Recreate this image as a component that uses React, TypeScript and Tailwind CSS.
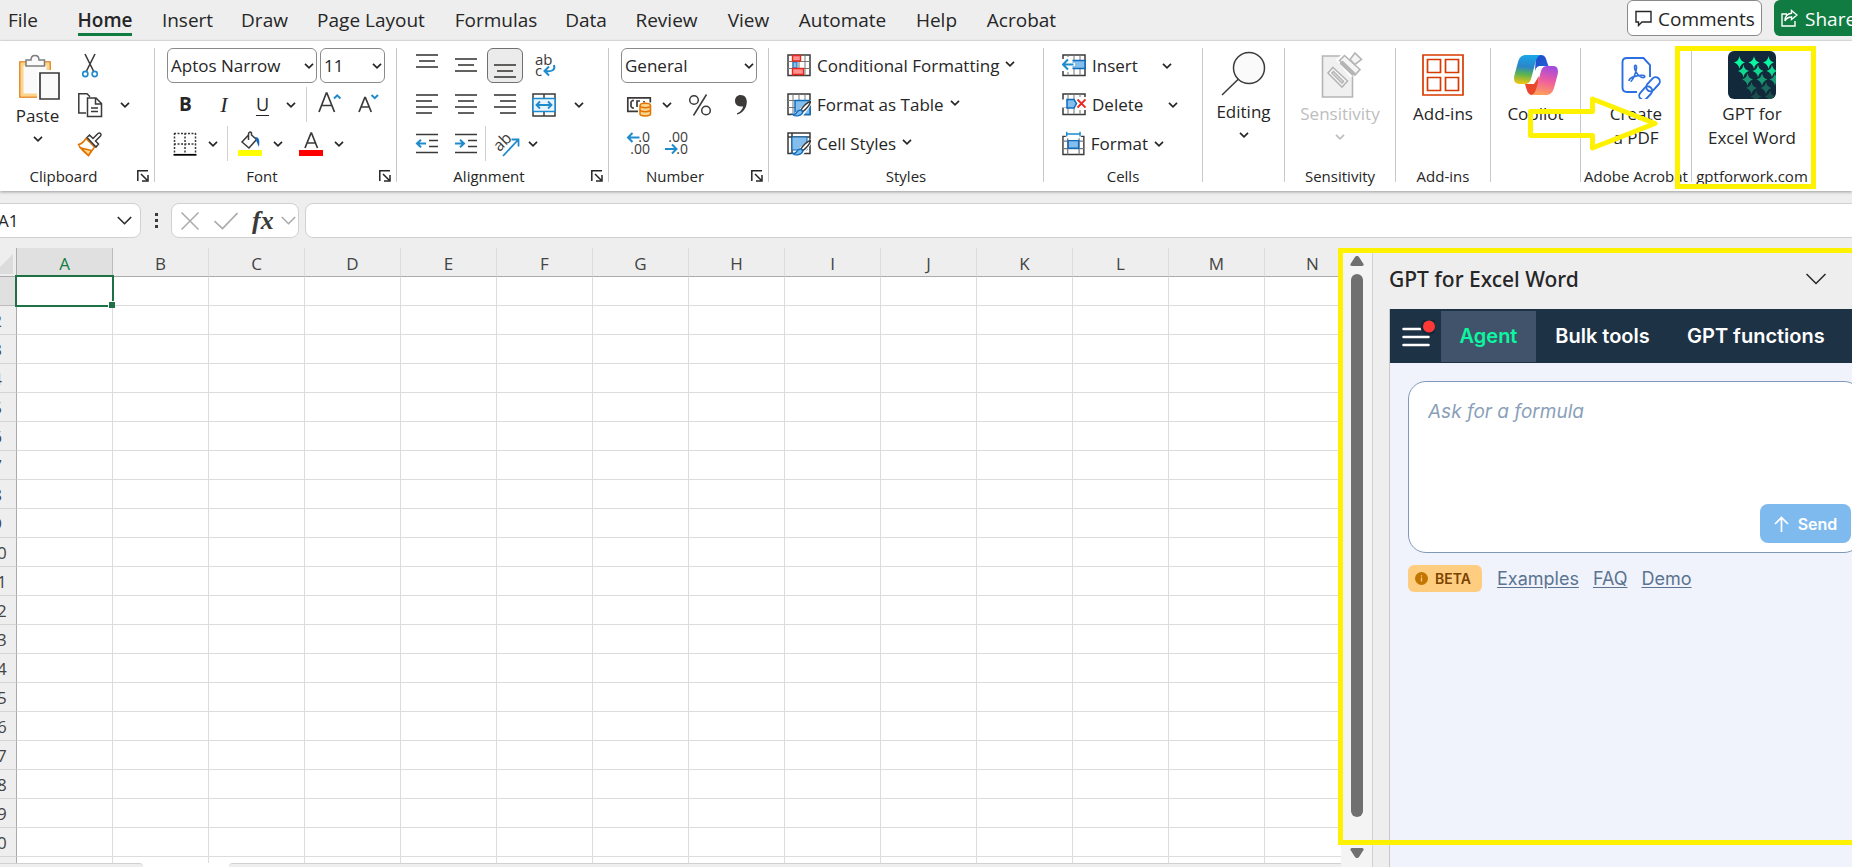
import type { ReactNode } from "react";
import clsx from "clsx";

const TABS = [
  { name: "File", width: "w-[46px] mr-[15px]" },
  { name: "Home", width: "w-[88px]" },
  { name: "Insert", width: "w-[77px]" },
  { name: "Draw", width: "w-[77px]" },
  { name: "Page Layout", width: "w-[136px]" },
  { name: "Formulas", width: "w-[114px]" },
  { name: "Data", width: "w-[66px]" },
  { name: "Review", width: "w-[95px]" },
  { name: "View", width: "w-[69px]" },
  { name: "Automate", width: "w-[119px]" },
  { name: "Help", width: "w-[69px]" },
  { name: "Acrobat", width: "w-[101px]" },
];

const COLUMNS = "ABCDEFGHIJKLMN".split("");
const ROWS = Array.from({ length: 21 }, (_, i) => i + 1);

const INK = "#3b3a39";
const BLUE = "#1e8bcd";

function Chevron({ className = "w-[10px]" }: { className?: string }) {
  return (
    <svg viewBox="0 0 10 6" className={clsx("shrink-0", className)} fill="none" stroke="currentColor" strokeWidth="1.7">
      <path d="M1 .8 5 4.8 9 .8" />
    </svg>
  );
}

function WideChevron({ className }: { className?: string }) {
  return (
    <svg width="15" height="9" viewBox="0 0 15 9" className={clsx("shrink-0", className)} fill="none" stroke="currentColor" strokeWidth="1.6">
      <path d="m.8 1 6.700 6.700L14.200 1" />
    </svg>
  );
}

function ToolButton({ label, className = "w-[39px]", children }: { label: string; className?: string; children: ReactNode }) {
  return (
    <button aria-label={label} className={clsx("flex h-[35px] shrink-0 items-center justify-center", className)}>
      {children}
    </button>
  );
}

function Separator() {
  return <span className="mx-[6px] h-[35px] w-px shrink-0 bg-[#d1d1d1]" />;
}

function Group({
  label,
  launcher,
  className,
  children,
}: {
  label?: string;
  launcher?: boolean;
  className: string;
  children: ReactNode;
}) {
  return (
    <section className={clsx("flex h-[134px] shrink-0 flex-col border-r border-[#c8c8c8]", className)}>
      <div className="h-[113px] shrink-0">{children}</div>
      <div className="mt-[5px] flex h-5 shrink-0 items-center">
        <span className={clsx("flex-1 text-center text-[15px] leading-5 whitespace-nowrap", launcher && "pr-[10px]")}>{label}</span>
        {launcher && (
          <button aria-label={`${label} settings`} className="mr-[5px]">
            <svg width="12" height="12" viewBox="0 0 12 12" fill="none" stroke="#262626" strokeWidth="1.5">
              <path d="M.8 11V.8H11M4 4l6 6M11 5v6H5" />
            </svg>
          </button>
        )}
      </div>
    </section>
  );
}

function LargeButton({
  icon,
  lines,
  chevron,
  disabled,
  iconHeight = "h-[54px]",
}: {
  icon: ReactNode;
  lines: string[];
  chevron?: boolean;
  disabled?: boolean;
  iconHeight?: string;
}) {
  return (
    <button disabled={disabled} className={clsx("flex w-full flex-col items-center text-[17px] leading-6", disabled && "text-[#bdbdbd]")}>
      <span className={clsx("flex items-center justify-center", iconHeight)}>{icon}</span>
      {lines.map((line) => (
        <span key={line} className="whitespace-nowrap">{line}</span>
      ))}
      {chevron && <Chevron className="mt-2 w-[10px]" />}
    </button>
  );
}

function Lines({ rows, y = 0 }: { rows: [number, number][]; y?: number }) {
  return (
    <svg width="24" height="24" viewBox="0 0 24 24" stroke={INK} strokeWidth="1.6">
      {rows.map(([x1, x2], i) => (
        <path key={i} d={`M${x1} ${y + i * 6}H${x2}`} />
      ))}
    </svg>
  );
}

function PasteIcon() {
  return (
    <svg width="44" height="48" viewBox="0 0 44 48" fill="none">
      <path d="M4 9h30v35H4z" fill="#fafafa" stroke="#e27400" strokeWidth="1.6" />
      <path d="M6 11h26v31H6z" stroke="#fbd58c" strokeWidth="3" />
      <path d="M10 13V7h5c0-3 1-4.500 4-4.500S23 4 23 7h5.500v6z" fill="#fafafa" stroke="#7d7d7d" strokeWidth="1.5" />
      <path d="M21 17h25v31H21z" fill="#fff" />
      <path d="M24 20h19v26H24z" fill="#fafafa" stroke={INK} strokeWidth="1.700" />
    </svg>
  );
}

function CutIcon() {
  return (
    <svg width="18" height="26" viewBox="0 0 18 26" fill="none" strokeWidth="1.6">
      <path d="M4 1 12.500 18M14 1 5.500 18" stroke={INK} />
      <circle cx="4.300" cy="21" r="2.600" stroke={BLUE} />
      <circle cx="13.700" cy="21" r="2.600" stroke={BLUE} />
    </svg>
  );
}

function CopyIcon() {
  return (
    <svg width="26" height="26" viewBox="0 0 26 26" fill="none" stroke={INK} strokeWidth="1.500">
      <path d="M9 21H1.800V1.800H10l3 3" />
      <path d="M10.500 6H19l5.500 5.500V24.500h-14zM18.500 6v6h6M14 16h7M14 19.500h7" />
    </svg>
  );
}

function PainterIcon() {
  return (
    <svg width="26" height="26" viewBox="0 0 26 26" fill="none" strokeWidth="1.500">
      <path d="m9 7.500 8.500 8.500-6 8.500C8 22 4 18.500 1.500 13.500 4.500 13 7 10.500 9 7.500z" fill="#fff" stroke="#e27400" />
      <path d="m4 17 10.500 2.500-3 5z" fill="#fbd58c" stroke="#e27400" />
      <path d="m10 6.500 2.500-2.500L16 7.500l5-5c2-1.500 4 .5 2.500 2.500l-5 5 3 3-2.500 3z" fill="#fff" stroke={INK} />
    </svg>
  );
}

function BordersIcon() {
  return (
    <svg width="24" height="24" viewBox="0 0 24 24" fill="none" stroke={INK} strokeWidth="1.500">
      <path d="M1 1.500h22M1.500 1v20M22.500 1v20M12 1v20M1 12h22" strokeDasharray="2 1.500" />
      <path d="M.5 22.800h23" stroke="#000" strokeWidth="1.800" />
    </svg>
  );
}

function FillIcon() {
  return (
    <svg width="24" height="26" viewBox="0 0 24 26" fill="none" strokeWidth="1.500">
      <path d="M10.500 4 4 11l7 6 7.500-8.500L13.500 4V2c-1-1.500-3-1-3 1v6" stroke={INK} />
      <path d="M17 6c4 0 5 3 4 10-1.500-3-2-5-3-6.500z" fill="#1668b5" />
      <path d="M0 19h24v6H0z" fill="#ff0" />
    </svg>
  );
}

function FontColorIcon() {
  return (
    <svg width="24" height="26" viewBox="0 0 24 26" fill="none" strokeWidth="1.700">
      <path d="M6 17 12 2h.5l6 15M8 12h9" stroke={INK} />
      <path d="M0 19h24v6H0z" fill="red" />
    </svg>
  );
}

function FontSizeIcon({ up }: { up?: boolean }) {
  return (
    <svg width="24" height="28" viewBox="0 0 24 28" fill="none" strokeWidth="1.700">
      <path d={up ? "M1 21 8.300 2h.6L16.500 21M3.500 14.500h10.500" : "M1 21 6.800 6.500h.6L13.300 21M3 16h8.500"} stroke={INK} />
      <path d={up ? "M16 7.500 19.200 4.300 22.400 7.500" : "M13.500 4 16.800 7.200 20 4"} stroke={BLUE} strokeWidth="2" />
    </svg>
  );
}

function WrapIcon() {
  return (
    <svg width="24" height="28" viewBox="0 0 24 28" fill="none" className="overflow-visible">
      <text x="2" y="13" fontSize="15" fill={INK} fontFamily="Open Sans">ab</text>
      <text x="2" y="24" fontSize="15" fill={INK} fontFamily="Open Sans">c</text>
      <path d="M21 13c1.500 5-2 7-9 6M16 14.500 11.500 19l4.500 4.500" stroke={BLUE} strokeWidth="2" />
    </svg>
  );
}

function MergeIcon() {
  return (
    <svg width="24" height="24" viewBox="0 0 24 24" fill="none" strokeWidth="1.500">
      <path d="M1 1h22v22H1zM12 1v5M12 18v5" stroke={INK} />
      <path d="M1 5.500h22v13H1z" fill="#eaf4fc" stroke={BLUE} />
      <path d="M4.500 12h15M8 8.500 4.500 12 8 15.500M16 8.500 19.500 12 16 15.500" stroke={BLUE} strokeWidth="1.800" />
    </svg>
  );
}

function IndentIcon({ right }: { right?: boolean }) {
  return (
    <svg width="24" height="24" viewBox="0 0 24 24" fill="none">
      <path d="M1 2.500h22M14 8.500h9M14 14.500h9M1 20.500h22" stroke={INK} strokeWidth="1.600" />
      <path d={right ? "M1 11.500h9M6 7.800l4 3.700-4 3.700" : "M2 11.500h9M6 7.800 2 11.500l4 3.700"} stroke={BLUE} strokeWidth="2" />
    </svg>
  );
}

function OrientationIcon() {
  return (
    <svg width="26" height="26" viewBox="0 0 26 26" fill="none" className="overflow-visible">
      <text x="3" y="19" fontSize="16" fill={INK} fontFamily="Open Sans" transform="rotate(-45 7 17)">ab</text>
      <path d="M9 25 24 9M17.500 8.500H24.500V15.500" stroke={BLUE} strokeWidth="1.800" />
    </svg>
  );
}

function CurrencyIcon() {
  return (
    <svg width="26" height="24" viewBox="0 0 26 24" fill="none">
      <path d="M1.800 4.800h22.500v13.500H1.800z" stroke={INK} strokeWidth="1.700" />
      <path d="M8 7.500H6.500L5 9v4.500L6.500 15H8M14 8h-3v6M18 8v3" stroke={INK} strokeWidth="1.700" />
      <path d="M12 9.500h14V24H12z" fill="#fff" />
      <path d="M14 12.500v8.500c0 2.500 10.500 2.500 10.500 0v-8.500" fill="#fbd58c" stroke="#e27400" strokeWidth="1.500" />
      <ellipse cx="19.300" cy="12.500" rx="5.200" ry="2.200" fill="#fbd58c" stroke="#e27400" strokeWidth="1.500" />
      <path d="M14 16.800c0 2.500 10.500 2.500 10.500 0" stroke="#e27400" strokeWidth="1.500" />
    </svg>
  );
}

function PercentIcon() {
  return (
    <svg width="24" height="24" viewBox="0 0 24 24" fill="none" stroke={INK} strokeWidth="1.500">
      <circle cx="6" cy="7" r="4.300" />
      <circle cx="18" cy="17.500" r="4.300" />
      <path d="M18.500 1.500 5.500 22.500" />
    </svg>
  );
}

function CommaIcon() {
  return (
    <svg width="14" height="22" viewBox="0 0 14 22">
      <path d="M6.500 1c4 0 6.500 2.800 6.300 7.300C12.500 14.500 8.500 19.500 3 20.500v-1.300c3-1 5.700-3.800 6-7C4 13.500 1 10.500 1 6.800 1 3.300 3.500 1 6.500 1z" fill={INK} />
    </svg>
  );
}

function DecimalIcon({ decrease }: { decrease?: boolean }) {
  return (
    <svg width="26" height="28" viewBox="0 0 26 28" fill="none" className="overflow-visible">
      <text x="24" y="12" textAnchor="end" fontSize="14" fill={INK} fontFamily="Open Sans">{decrease ? ".00" : ".0"}</text>
      <text x="24" y="24" textAnchor="end" fontSize="14" fill={INK} fontFamily="Open Sans">{decrease ? ".0" : ".00"}</text>
      <path d={decrease ? "M1 19h11.500M8 14.500l4.500 4.500L8 23.500" : "M13.500 7.500H2M6.500 3 2 7.500 6.500 12"} stroke={BLUE} strokeWidth="2" />
    </svg>
  );
}

function SheetGrid() {
  return (
    <>
      <path d="M1 1h22v20.500H1z" fill="#fff" stroke={INK} strokeWidth="1.500" />
      <path d="M1 7.500h22M1 14.500h22M6 1v20.500M12 1v20.500M18 1v20.500" stroke="#777" />
    </>
  );
}

function Brush() {
  return (
    <>
      <path d="M24 7 10 18l-6 5h12l8-11z" fill="#fff" />
      <path d="M23.500 8.500c-3 .5-8 5.500-9.500 8.500l2 1.500c3-2.500 7-7 7.500-10z" fill="#fff" stroke={INK} strokeWidth="1.500" />
      <path d="M14 17c-3-.5-4 1.500-5 3.500-1 1.200-2 1.200-3.500 1 3 2.500 9.500 1.500 10.300-2.700z" fill="#83beec" stroke="#0f6cbd" strokeWidth="1.400" />
    </>
  );
}

function ConditionalIcon() {
  return (
    <svg width="24" height="23" viewBox="0 0 24 23" fill="none">
      <SheetGrid />
      <path d="M6 8h4v6H6z" fill="#83beec" stroke="#0f6cbd" />
      <path d="M5.500 1.500h8V7h-8zM5.500 14.500h11v6h-11z" fill="#ff9191" stroke="#e8281e" strokeWidth="1.400" />
    </svg>
  );
}

function FormatTableIcon() {
  return (
    <svg width="24" height="24" viewBox="0 0 24 24" fill="none">
      <SheetGrid />
      <path d="M8 7.500h15v14H8z" fill="#83beec" stroke="#0f6cbd" strokeWidth="1.500" />
      <Brush />
    </svg>
  );
}

function CellStylesIcon() {
  return (
    <svg width="24" height="24" viewBox="0 0 24 24" fill="none">
      <path d="M1 1h22v20.500H1zM1 5h22M5 1v20" fill="#fff" stroke={INK} strokeWidth="1.500" />
      <path d="M5 5h15v13H5z" fill="#83beec" stroke="#0f6cbd" />
      <Brush />
    </svg>
  );
}

function InsertCellsIcon() {
  return (
    <svg width="24" height="23" viewBox="0 0 24 23" fill="none">
      <SheetGrid />
      <path d="M0 5h10v12H0z" fill="#fff" />
      <path d="M8 6.500h15v8H8z" fill="#83beec" stroke="#0f6cbd" strokeWidth="1.500" />
      <path d="M10.500 3v6H13v3h-2.500v6H5V3z" fill="#fff" />
      <path d="M1.500 10.500h10M6 5.500l-5 5 5 5" stroke={BLUE} strokeWidth="2" />
    </svg>
  );
}

function DeleteCellsIcon() {
  return (
    <svg width="24" height="23" viewBox="0 0 24 23" fill="none">
      <SheetGrid />
      <path d="M0 6.500h4.500v8H0zM13 4h11v13H13z" fill="#fff" />
      <path d="M5 6.500h7l2.500 4-2.500 4.500H5z" fill="#83beec" stroke="#0f6cbd" strokeWidth="1.500" />
      <path d="m15.500 6.500 8 8M23.500 6.500l-8 8" stroke="#e8281e" strokeWidth="1.800" />
    </svg>
  );
}

function FormatCellsIcon() {
  return (
    <svg width="24" height="25" viewBox="0 0 24 25" fill="none">
      <path d="M1 5h22v19H1z" fill="#fff" stroke={INK} strokeWidth="1.500" />
      <path d="M1 10h22M1 18h22M6 5v19M18 5v19" stroke="#777" strokeWidth="1.300" />
      <path d="M4 0h16v7H4z" fill="#fff" />
      <path d="M6.500 9.500h11v8h-11z" fill="#83beec" stroke="#0f6cbd" strokeWidth="1.500" />
      <path d="M5 2.500h14M5 0v5M19 0v5" stroke={BLUE} strokeWidth="1.500" />
    </svg>
  );
}

function SearchIcon() {
  return (
    <svg width="46" height="48" viewBox="0 0 46 48" fill="none" stroke={INK} strokeWidth="1.500">
      <circle cx="28" cy="18" r="15.500" fill="#fafafa" />
      <path d="M17.500 29 1 45" />
    </svg>
  );
}

function SensitivityIcon() {
  return (
    <svg width="42" height="48" viewBox="0 0 42 48" fill="none" stroke="#b5b5b5" strokeWidth="1.600" className="ml-1">
      <path d="M1.500 5h30v41h-30z" fill="#f0f0f0" />
      <path d="m24 0-9 9 14 17 13-4V0z" fill="#fff" stroke="none" />
      <path d="m12 16.500 14.500 13.500-5.500 6L7 22z" fill="#fafafa" />
      <path d="m12.500 20.500 10 10-1.500 1.500-10-10z" />
      <path d="M23.500 4.500 39 18.500l-5 5.500L18.500 9.500z" fill="#f5f5f5" />
      <path d="m20 11 13 12.500" strokeWidth="4.500" />
      <path d="m29 8.500 5-6.500 6.500 6.500-6.500 5z" fill="#f5f5f5" />
    </svg>
  );
}

function AddinsIcon() {
  return (
    <svg width="42" height="42" viewBox="0 0 42 42" fill="none" stroke="#d83b01" strokeWidth="1.700">
      <path d="M1 1h40v40H1z" />
      <path d="M5.500 5.500h13v13h-13zM23.500 5.500h13v13h-13zM5.500 23.500h13v13h-13zM23.500 23.500h13v13h-13z" />
    </svg>
  );
}

function CopilotIcon() {
  return (
    <svg width="44" height="40" viewBox="0 0 44 40">
      <defs>
        <linearGradient id="cpLeft" x1=".4" y1="0" x2=".3" y2="1">
          <stop offset="0" stopColor="#18a5e8" />
          <stop offset=".4" stopColor="#2b86c9" />
          <stop offset=".65" stopColor="#58b255" />
          <stop offset="1" stopColor="#f3c60e" />
        </linearGradient>
        <linearGradient id="cpRight" x1=".6" y1="0" x2=".4" y2="1">
          <stop offset="0" stopColor="#a24be0" />
          <stop offset=".5" stopColor="#ee5e9e" />
          <stop offset="1" stopColor="#ffa05a" />
        </linearGradient>
        <linearGradient id="cpTop" x1="0" y1="0" x2="1" y2="1">
          <stop offset="0" stopColor="#1b49c4" />
          <stop offset="1" stopColor="#2666dd" />
        </linearGradient>
      </defs>
      <path d="M22 0h5c4 0 5 3 6 7l1.500 4H27c-4 0-5 2-6 5z" fill="url(#cpTop)" />
      <path d="M11 29h9l5-8-2 19h-5c-4 0-5-4-7-11z" fill="#e9482c" />
      <path d="M12 0h15c-4 1-5 5-6.500 11L17 24c-1 3.500-3 5-6 5H5c-4 0-6-3-4.500-9L4 7c1.200-4.500 4-7 8-7z" fill="url(#cpLeft)" />
      <path d="M32 40H17c4-1 5-5 6.500-11L27 16c1-3.500 3-5 6-5h6c4 0 6 3 4.500 9L40 33c-1.200 4.500-4 7-8 7z" fill="url(#cpRight)" />
    </svg>
  );
}

function PdfIcon() {
  return (
    <svg width="40" height="42" viewBox="0 0 40 42" fill="none" stroke="#2b6fe0" strokeWidth="1.900" className="mt-[5px] ml-[10px]">
      <path d="M16 35H6c-3 0-4.500-1.500-4.500-4.500V5C1.500 2 3 1 6 1h16.500l6.500 7v12" />
      <path d="M8 24c0-4 11-6.500 15-5.500 2 1 0 3-3 1.500-4-2-6.500-7-6.500-10s2.500-2 2 1.500C15 16 11.500 24 9.500 24.500" strokeWidth="1.600" />
      <rect x="24" y="23" width="16" height="8.500" rx="4.200" transform="rotate(-48 32 27.200)" />
      <rect x="17" y="32" width="15" height="8.500" rx="4.200" transform="rotate(-48 24.500 36)" />
    </svg>
  );
}

const SPARKS = [
  [11.5, 11.5, "#0bf7a0"], [26, 11.5, "#0bf7a0"], [40.500, 11.500, "#0bf7a0"],
  [15.5, 20, "#10d890"], [30, 20, "#10d890"], [44, 20, "#10d890"],
  [19.5, 28.5, "#189a72"], [34, 28.500, "#189a72"], [47, 28.500, "#189a72"],
  [23.5, 37, "#1b6b5c"], [38, 37, "#1b6b5c"],
  [28, 45.500, "#1a4f4c"], [42, 45.500, "#1a4f4c"],
] as const;

function GptIcon() {
  return (
    <svg width="48" height="48" viewBox="0 0 48 48" className="rounded-md">
      <path d="M0 0h48v48H0z" fill="#12283b" />
      {SPARKS.map(([x, y, fill]) => (
        <path key={`${x}-${y}`} d={`M${x} ${y - 6.5}q.6 5 5.500 6.500-4.900 1.500-5.500 6.500-.6-5-5.500-6.500 4.900-1.500 5.500-6.500z`} fill={fill} />
      ))}
    </svg>
  );
}

const STYLE_COMMANDS = [
  { name: "Conditional Formatting", icon: <ConditionalIcon /> },
  { name: "Format as Table", icon: <FormatTableIcon /> },
  { name: "Cell Styles", icon: <CellStylesIcon /> },
];

const CELL_COMMANDS = [
  { name: "Insert", icon: <InsertCellsIcon />, width: "w-[110px]" },
  { name: "Delete", icon: <DeleteCellsIcon />, width: "w-[116px]" },
  { name: "Format", icon: <FormatCellsIcon />, width: "w-[102px]" },
];

function RibbonSelect({ label, value, className }: { label: string; value: string; className: string }) {
  return (
    <span className={clsx("relative block h-[35px]", className)}>
      <select aria-label={label} className="h-full w-full appearance-none rounded-md border border-[#8a8a8a] bg-white pl-[3px] text-[17px]">
        <option>{value}</option>
      </select>
      <Chevron className="pointer-events-none absolute top-[15px] right-[3px] w-[10px]" />
    </span>
  );
}

function TabBar() {
  return (
    <header className="flex h-[41px] shrink-0 border-b border-[#e3e3e3]">
      <nav className="flex">
        {TABS.map((tab) => (
          <button key={tab.name} className={clsx("flex h-10 flex-col items-center pt-[6px] text-[19px] leading-7 whitespace-nowrap", tab.width)}>
            {tab.name === "Home" ? (
              <span className="h-[30px] border-b-3 border-[#107c41] font-semibold">{tab.name}</span>
            ) : (
              tab.name
            )}
          </button>
        ))}
      </nav>
      <div className="-mr-2 ml-auto flex h-9 gap-3">
        <button className="flex w-[135px] items-center gap-[6px] rounded-md border border-[#8a8a8a] bg-white pt-[2px] pl-[7px] text-[19px]">
          <svg width="17" height="17" viewBox="0 0 17 17" fill="none" stroke="#262626" strokeWidth="1.400" className="-mt-[2px]">
            <path d="M1 1.500h15v10.500H7L3.500 15.500V12H1z" />
          </svg>
          Comments
        </button>
        <button className="flex w-[86px] items-center gap-[7px] rounded-l-md bg-[#107c41] pt-[2px] pl-[7px] text-[19px] text-white">
          <svg width="17" height="18" viewBox="0 0 17 18" fill="none" stroke="#fff" strokeWidth="1.400" className="-mt-[2px]">
            <path d="M6 5H1v12h13v-5M10.500 1.500 16 6l-5.500 4.500V8C7.500 8 5.500 9 4 12c0-5 3-7.500 6.500-7.800z" />
          </svg>
          Share
        </button>
      </div>
    </header>
  );
}

function Ribbon() {
  return (
    <div className="relative z-10 flex h-[150px] shrink-0 bg-white pt-[7px] shadow-[0_1px_3px_rgba(0,0,0,0.35)]">
      <Group label="Clipboard" launcher className="w-[155px]">
        <div className="flex">
          <div className="w-[75px] pt-[2px]">
            <LargeButton icon={<PasteIcon />} lines={["Paste"]} chevron />
          </div>
          <div className="flex w-[30px] flex-col gap-1">
            <ToolButton label="Cut" className="w-[30px]"><CutIcon /></ToolButton>
            <ToolButton label="Copy" className="w-[30px]"><CopyIcon /></ToolButton>
            <ToolButton label="Format Painter" className="w-[30px]"><PainterIcon /></ToolButton>
          </div>
          <ToolButton label="Copy options" className="mt-[39px] w-10"><Chevron /></ToolButton>
        </div>
      </Group>

      <Group label="Font" launcher className="w-[242px]">
        <div className="flex flex-col gap-1 pl-[11px]">
          <div className="flex gap-[3px] pl-px">
            <RibbonSelect label="Font" value="Aptos Narrow" className="w-[150px]" />
            <RibbonSelect label="Font size" value="11" className="w-[65px]" />
          </div>
          <div className="flex items-center">
            <ToolButton label="Bold"><span className="text-[19px] font-bold">B</span></ToolButton>
            <ToolButton label="Italic" className="w-[38px]"><i className="font-['Liberation_Serif',serif] text-[22px]">I</i></ToolButton>
            <ToolButton label="Underline"><u className="text-[18px] underline-offset-4">U</u></ToolButton>
            <ToolButton label="Underline options" className="w-[18px]"><Chevron /></ToolButton>
            <Separator />
            <ToolButton label="Increase font size" className="w-[34px]"><FontSizeIcon up /></ToolButton>
            <ToolButton label="Decrease font size" className="w-[46px]"><FontSizeIcon /></ToolButton>
          </div>
          <div className="flex items-center">
            <ToolButton label="Borders" className="w-[38px]"><BordersIcon /></ToolButton>
            <ToolButton label="Border options" className="w-[17px]"><Chevron /></ToolButton>
            <Separator />
            <ToolButton label="Fill color" className="w-8"><FillIcon /></ToolButton>
            <ToolButton label="Fill color options" className="w-6"><Chevron /></ToolButton>
            <ToolButton label="Font color" className="w-[42px]"><FontColorIcon /></ToolButton>
            <ToolButton label="Font color options" className="w-[14px]"><Chevron /></ToolButton>
          </div>
        </div>
      </Group>

      <Group label="Alignment" launcher className="w-[212px]">
        <div className="flex flex-col gap-1 pl-[10px]">
          <div className="flex">
            <ToolButton label="Top align"><Lines rows={[[1, 23], [4, 20], [1, 23]]} y={1} /></ToolButton>
            <ToolButton label="Middle align"><Lines rows={[[1, 23], [4, 20], [1, 23]]} y={5} /></ToolButton>
            <ToolButton label="Bottom align" className="w-[39px] pr-px pl-[2px]">
              <span className="flex h-full w-full items-center justify-center rounded-md border border-[#707070] bg-[#ebebeb]">
                <Lines rows={[[1, 23], [4, 20], [1, 23]]} y={11} />
              </span>
            </ToolButton>
            <ToolButton label="Wrap text" className="w-[41px]"><WrapIcon /></ToolButton>
          </div>
          <div className="flex">
            <ToolButton label="Align left"><Lines rows={[[1, 23], [1, 17], [1, 23], [1, 17]]} y={2} /></ToolButton>
            <ToolButton label="Center"><Lines rows={[[1, 23], [4, 20], [1, 23], [4, 20]]} y={2} /></ToolButton>
            <ToolButton label="Align right"><Lines rows={[[1, 23], [7, 23], [1, 23], [7, 23]]} y={2} /></ToolButton>
            <ToolButton label="Merge and center"><MergeIcon /></ToolButton>
            <ToolButton label="Merge options" className="w-8"><Chevron /></ToolButton>
          </div>
          <div className="flex items-center">
            <ToolButton label="Decrease indent"><IndentIcon /></ToolButton>
            <ToolButton label="Increase indent"><IndentIcon right /></ToolButton>
            <span className="h-[35px] w-px shrink-0 bg-[#d1d1d1]" />
            <ToolButton label="Orientation" className="w-[42px]"><OrientationIcon /></ToolButton>
            <ToolButton label="Orientation options" className="w-[10px]"><Chevron /></ToolButton>
          </div>
        </div>
      </Group>

      <Group label="Number" launcher className="w-[160px]">
        <div className="flex flex-col gap-1 pl-[11px]">
          <div className="pl-px">
            <RibbonSelect label="Number format" value="General" className="w-[136px]" />
          </div>
          <div className="flex">
            <ToolButton label="Currency" className="w-[38px]"><CurrencyIcon /></ToolButton>
            <ToolButton label="Currency options" className="w-[17px]"><Chevron /></ToolButton>
            <ToolButton label="Percent" className="w-[50px]"><PercentIcon /></ToolButton>
            <ToolButton label="Comma style" className="w-8"><CommaIcon /></ToolButton>
          </div>
          <div className="flex">
            <ToolButton label="Increase decimal" className="w-[37px]"><DecimalIcon /></ToolButton>
            <ToolButton label="Decrease decimal"><DecimalIcon decrease /></ToolButton>
          </div>
        </div>
      </Group>

      <Group label="Styles" className="w-[275px]">
        <div className="flex flex-col items-start gap-1 pl-[18px]">
          {STYLE_COMMANDS.map((cmd) => (
            <button key={cmd.name} className="flex h-[35px] items-center gap-[6px] text-[17px] whitespace-nowrap">
              {cmd.icon}
              {cmd.name}
              <Chevron className="-mt-[3px] w-[10px]" />
            </button>
          ))}
        </div>
      </Group>

      <Group label="Cells" className="w-[159px]">
        <div className="flex flex-col gap-1 pl-[18px]">
          {CELL_COMMANDS.map((cmd) => (
            <button key={cmd.name} className={clsx("flex h-[35px] items-center gap-[6px] text-[17px]", cmd.width)}>
              {cmd.icon}
              {cmd.name}
              <Chevron className="ml-auto w-[10px]" />
            </button>
          ))}
        </div>
      </Group>

      <Group className="w-[82px]">
        <LargeButton icon={<SearchIcon />} lines={["Editing"]} chevron iconHeight="h-[52px]" />
      </Group>
      <Group label="Sensitivity" className="w-[111px]">
        <LargeButton icon={<SensitivityIcon />} lines={["Sensitivity"]} chevron disabled />
      </Group>
      <Group label="Add-ins" className="w-[95px]">
        <LargeButton icon={<AddinsIcon />} lines={["Add-ins"]} />
      </Group>
      <Group className="relative w-[90px]">
        <LargeButton icon={<CopilotIcon />} lines={["Copilot"]} />
        <svg className="absolute top-[47px] left-[35px] z-10" width="134" height="58" viewBox="0 0 134 58" fill="none" stroke="#fff200" strokeWidth="5" strokeLinejoin="round">
          <path d="M4.500 16.500H66.500V4L129 28.500 66.500 53V40.500H4.500z" />
        </svg>
      </Group>
      <Group label="Adobe Acrobat" className="w-[111px]">
        <LargeButton icon={<PdfIcon />} lines={["Create", "a PDF"]} />
      </Group>
      <section className="relative h-[134px] w-[120px] shrink-0">
        <div className="h-[113px]">
          <LargeButton icon={<GptIcon />} lines={["GPT for", "Excel Word"]} />
        </div>
        <div className="mt-[5px] text-center text-[15px] leading-5">gptforwork.com</div>
        <div className="pointer-events-none absolute -top-[2px] -left-[17px] h-[143px] w-[141px] border-5 border-[#fff200]" />
      </section>
    </div>
  );
}

function FormulaBar() {
  return (
    <div className="flex h-[57px] shrink-0 pt-3 pb-[10px]">
      <div className="-ml-2 flex w-[149px] items-center rounded-lg border border-[#d1d1d1] bg-white">
        <input aria-label="Name box" defaultValue="A1" className="w-full min-w-0 pl-[5px] text-[17px] outline-none" />
        <WideChevron className="mr-2" />
      </div>
      <div className="flex w-[30px] flex-col items-center justify-center gap-[3px]">
        <span className="h-[3px] w-[3px] bg-[#3b3a39]" />
        <span className="h-[3px] w-[3px] bg-[#3b3a39]" />
        <span className="h-[3px] w-[3px] bg-[#3b3a39]" />
      </div>
      <div className="flex w-32 items-center rounded-lg border border-[#d1d1d1] bg-white pl-[9px]">
        <button aria-label="Cancel">
          <svg width="18" height="18" viewBox="0 0 18 18" stroke="#ababab" strokeWidth="1.500"><path d="m.5.500 17 17M17.500.500l-17 17" /></svg>
        </button>
        <button aria-label="Enter" className="ml-[15px]">
          <svg width="24" height="18" viewBox="0 0 24 18" fill="none" stroke="#ababab" strokeWidth="1.700"><path d="m.5 9 8 7.500L23.500 1" /></svg>
        </button>
        <button aria-label="Insert function" className="ml-[14px] font-['Liberation_Serif',serif] text-[26px] leading-6 font-bold text-[#3b3a39] italic">
          fx
        </button>
        <WideChevron className="mr-[2px] ml-auto text-[#ababab]" />
      </div>
      <input aria-label="Formula bar" className="-mr-2 ml-[6px] min-w-0 flex-1 rounded-lg border border-[#d1d1d1] bg-white px-2 outline-none" />
    </div>
  );
}

function Sheet() {
  return (
    <div className="flex min-w-0 flex-1 flex-col">
      <div className="relative min-h-0 flex-1 overflow-hidden bg-white">
        <table className="w-max table-fixed border-separate border-spacing-0 text-[17px] text-[#444]">
          <thead>
            <tr>
              <th className="h-[29px] w-[17px] min-w-[17px] border-r border-b border-[#ababab] bg-[#eee] p-0">
                <svg width="13" height="20" viewBox="0 0 13 20" className="mt-[3px]"><path d="M13 0v20H0v-7z" fill="#dcdcdc" /></svg>
              </th>
              {COLUMNS.map((col) => (
                <th
                  key={col}
                  className={clsx(
                    "h-[29px] w-24 min-w-24 border-r border-b border-b-[#ababab] p-0 pt-[3px] leading-[25px] font-normal",
                    col === "A" ? "border-r-[#bbb] bg-[#e0e0e0] text-[#107c41]" : "border-r-[#dcdcdc] bg-[#eee]",
                  )}
                >
                  {col}
                </th>
              ))}
            </tr>
          </thead>
          <tbody>
            {ROWS.map((row) => (
              <tr key={row}>
                <th
                  className={clsx(
                    "h-[29px] w-[17px] max-w-[17px] overflow-hidden border-r border-b border-r-[#ababab] p-0 font-normal",
                    row === 1 ? "border-b-[#bbb] bg-[#e0e0e0]" : "border-b-[#d4d4d4] bg-[#eee]",
                  )}
                >
                  <span className="-ml-5 block w-[34px] pt-[2px] text-center leading-[26px]">{row === 1 ? "" : row}</span>
                </th>
                {COLUMNS.map((col) => (
                  <td key={col} className="h-[29px] border-r border-b border-[#dcdcdc] p-0" />
                ))}
              </tr>
            ))}
          </tbody>
        </table>
        <div className="absolute top-[27px] left-[15px] h-8 w-[99px] border-2 border-[#1e7145]">
          <span className="absolute -right-[3px] -bottom-[3px] h-[7px] w-[7px] border-t border-l border-white bg-[#1e7145]" />
        </div>
      </div>
      <div className="flex h-1 shrink-0 bg-white">
        <span className="w-[143px] rounded-tr-md border-t border-[#d1d1d1] bg-[#eee]" />
        <span className="ml-[86px] flex-1 rounded-tl-md border-t border-[#d1d1d1] bg-[#eee]" />
      </div>
    </div>
  );
}

function ScrollBar() {
  return (
    <div className="flex w-8 shrink-0 flex-col items-center border-r border-[#d1d1d1] bg-[#f4f4f4] pt-2 pb-[9px]">
      <svg width="14" height="10" viewBox="0 0 14 10"><path d="M7 0c1 0 1.500.5 2 1l4.500 7c.5 1-.2 2-1.500 2H2C.7 10 0 9 .500 8L5 1c.5-.5 1-1 2-1z" fill="#707070" /></svg>
      <div className="mt-2 mb-[31px] w-3 flex-1 rounded-full bg-[#707070]" />
      <svg width="14" height="10" viewBox="0 0 14 10"><path d="M7 10c1 0 1.500-.5 2-1l4.500-7c.5-1-.2-2-1.500-2H2C.7 0 0 1 .500 2L5 9c.5.500 1 1 2 1z" fill="#707070" /></svg>
    </div>
  );
}

function TaskPane() {
  return (
    <aside className="flex min-w-0 flex-1 flex-col pl-4">
      <div className="flex h-[61px] shrink-0 items-center justify-between pr-[26px]">
        <h2 className="font-['Noto_Sans',sans-serif] text-[21px] leading-7 font-medium">GPT for Excel Word</h2>
        <button aria-label="Pane options">
          <svg width="20" height="12" viewBox="0 0 20 12" fill="none" stroke="#262626" strokeWidth="1.500"><path d="m.5 1 9.500 9.500L19.500 1" /></svg>
        </button>
      </div>
      <div className="flex-1 border-l border-[#c8c8c8] bg-[#f0f3fb] font-['Inter',sans-serif]">
        <nav className="flex h-[54px] items-center bg-[#1e3246] text-[20px] font-semibold whitespace-nowrap text-white">
          <button aria-label="Menu" className="flex h-full w-[51px] items-center justify-center">
            <svg width="38" height="32" viewBox="0 0 38 32" fill="none">
              <path d="M6.500 9h25M6.500 17h25M6.500 25h25" stroke="#fff" strokeWidth="2.500" strokeLinecap="round" />
              <circle cx="32" cy="6.500" r="8.500" fill="#12283b" />
              <circle cx="32" cy="6.500" r="6" fill="#ff3a36" />
            </svg>
          </button>
          <button className="h-[51px] w-[95px] bg-[#40536a] text-[#0bf7a0]">Agent</button>
          <button className="h-full w-[133px]">Bulk tools</button>
          <button className="h-full flex-1 pl-[18px] text-left">GPT functions</button>
        </nav>
        <div className="-mr-[10px] pt-[18px] pl-[18px]">
          <div className="flex h-[172px] flex-col rounded-[18px] border border-[#7f9ab8] bg-white pt-[18px] pr-[10px] pb-[9px] pl-[19px]">
            <textarea
              aria-label="Ask for a formula"
              placeholder="Ask for a formula"
              className="min-h-0 flex-1 resize-none text-[19px] leading-6 outline-none placeholder:text-[#8aa0b8] placeholder:italic"
            />
            <button className="flex h-[39px] w-[91px] shrink-0 items-center justify-center gap-[9px] self-end rounded-lg bg-[#7fbaef] text-[16px] font-semibold text-white">
              <svg width="15" height="16" viewBox="0 0 15 16" fill="none" stroke="#fff" strokeWidth="1.700"><path d="M7.500 16V1.500M1 8l6.500-6.500L14 8" /></svg>
              Send
            </button>
          </div>
          <div className="mt-3 flex h-[27px] items-center text-[18px] text-[#5b7391]">
            <span className="mr-[15px] flex h-[27px] w-[74px] items-center gap-[7px] rounded-md bg-[#ffcd80] pl-[7px] text-[14px] font-semibold text-[#7a4300]">
              <svg width="13" height="13" viewBox="0 0 13 13">
                <circle cx="6.500" cy="6.500" r="6.500" fill="#c27500" />
                <path d="M6.500 5.500v4M6.500 3.200v1.200" stroke="#ffcd80" strokeWidth="1.300" />
              </svg>
              BETA
            </span>
            <a href="#examples" className="mr-[14px] underline underline-offset-2">Examples</a>
            <a href="#faq" className="mr-[14px] underline underline-offset-2">FAQ</a>
            <a href="#demo" className="underline underline-offset-2">Demo</a>
          </div>
        </div>
      </div>
    </aside>
  );
}

export default function App() {
  return (
    <div className="flex h-screen flex-col overflow-hidden bg-[#eee] font-['Open_Sans','Noto_Sans',sans-serif] text-[#262626]">
      <TabBar />
      <Ribbon />
      <FormulaBar />
      <main className="flex min-h-0 flex-1">
        <Sheet />
        <div className="relative flex w-[511px] shrink-0">
          <ScrollBar />
          <TaskPane />
          <div className="pointer-events-none absolute top-0 -right-2 bottom-[22px] -left-[3px] border-5 border-[#fff200]" />
        </div>
      </main>
    </div>
  );
}
